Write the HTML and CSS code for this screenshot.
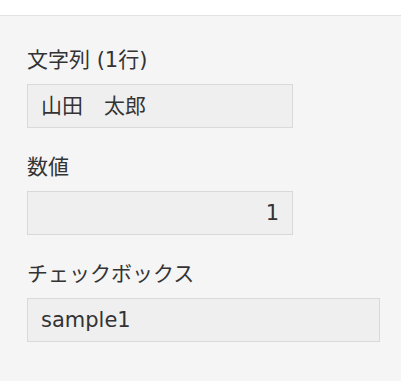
FILE: index.html
```html
<!DOCTYPE html>
<html lang="ja">
<head>
<meta charset="utf-8">
<link rel="stylesheet" href="styles.css">
</head>
<body>
<div class="topbar"></div>
<div class="content">
  <div class="field">
    <div class="label">文字列 (1行)</div>
    <div class="value">山田　太郎</div>
  </div>
  <div class="field">
    <div class="label">数値</div>
    <div class="value number">1</div>
  </div>
  <div class="field">
    <div class="label">チェックボックス</div>
    <div class="value wide">sample1</div>
  </div>
</div>
</body>
</html>
```
FILE: styles.css
```css
html, body {
  margin: 0;
  padding: 0;
}
body {
  background: #f5f5f5;
  font-family: "DejaVu Sans", "Noto Sans CJK JP", sans-serif;
  font-size: 21px;
  color: #333333;
}
.topbar {
  height: 15px;
  background: #ffffff;
  border-bottom: 1px solid #e3e3e3;
}
.content {
  padding: 29px 0 0 27px;
}
.field {
  margin-bottom: 24px;
}
.label {
  line-height: 30px;
  height: 30px;
  margin-bottom: 9px;
  white-space: nowrap;
}
.value {
  box-sizing: border-box;
  width: 266px;
  height: 44px;
  line-height: 42px;
  padding: 0 13px;
  background: #efefef;
  border: 1px solid #d9d9d9;
  white-space: nowrap;
}
.value.number {
  text-align: right;
}
.value.wide {
  width: 353px;
}
```
